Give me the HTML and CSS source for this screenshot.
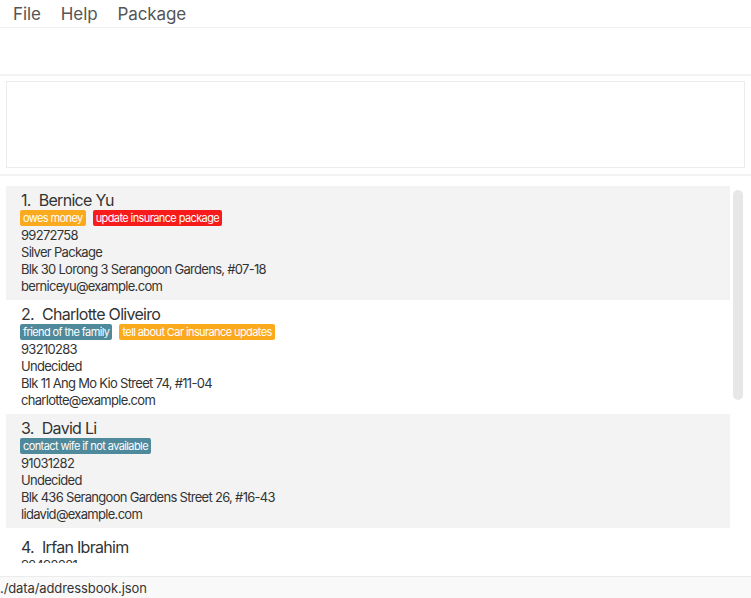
FILE: index.html
```html
<!DOCTYPE html>
<html>
<head>
<meta charset="utf-8">
<link rel="stylesheet" href="styles.css">
</head>
<body>
<div class="app">
  <nav class="menubar">
    <span class="menu">File</span>
    <span class="menu">Help</span>
    <span class="menu">Package</span>
  </nav>
  <div class="command"></div>
  <div class="sep"></div>
  <div class="result-wrap"><div class="result"></div></div>
  <div class="sep"></div>
  <div class="list-wrap">
    <div class="cells">
      <div class="cell shade">
        <div class="name"><span class="idx">1.</span>Bernice Yu</div>
        <div class="tags"><span class="tag orange">owes money</span><span class="tag red">update insurance package</span></div>
        <div class="line">99272758</div>
        <div class="line">Silver Package</div>
        <div class="line">Blk 30 Lorong 3 Serangoon Gardens, #07-18</div>
        <div class="line">berniceyu@example.com</div>
      </div>
      <div class="cell">
        <div class="name"><span class="idx">2.</span>Charlotte Oliveiro</div>
        <div class="tags"><span class="tag teal">friend of the family</span><span class="tag orange">tell about Car insurance updates</span></div>
        <div class="line">93210283</div>
        <div class="line">Undecided</div>
        <div class="line">Blk 11 Ang Mo Kio Street 74, #11-04</div>
        <div class="line">charlotte@example.com</div>
      </div>
      <div class="cell shade">
        <div class="name"><span class="idx">3.</span>David Li</div>
        <div class="tags"><span class="tag teal">contact wife if not available</span></div>
        <div class="line">91031282</div>
        <div class="line">Undecided</div>
        <div class="line">Blk 436 Serangoon Gardens Street 26, #16-43</div>
        <div class="line">lidavid@example.com</div>
      </div>
      <div class="cell notags">
        <div class="name"><span class="idx">4.</span>Irfan Ibrahim</div>
        <div class="line">92492021</div>
        <div class="line">Undecided</div>
        <div class="line">Blk 47 Tampines Street 20, #17-35</div>
        <div class="line">irfan@example.com</div>
      </div>
    </div>
    <div class="scrollbar"><div class="thumb"></div></div>
  </div>
  <footer class="status">./data/addressbook.json</footer>
</div>
</body>
</html>
```
FILE: styles.css
```css
html, body {
  margin: 0;
  padding: 0;
  background: #fff;
}
body {
  font-family: "Inter", "Liberation Sans", sans-serif;
  color: #333;
  width: 751px;
  height: 598px;
  overflow: hidden;
}
.app {
  display: flex;
  flex-direction: column;
  height: 598px;
}
.menubar {
  height: 27px;
  border-bottom: 1px solid #efefef;
  display: flex;
  align-items: center;
  padding-left: 13px;
  gap: 20px;
  font-size: 17px;
  letter-spacing: -0.1px;
  color: #555;
}
.command {
  height: 46px;
}
.sep {
  height: 2px;
  background: #f3f3f3;
}
.result-wrap {
  padding: 5px 6px 6px 6px;
}
.result {
  height: 85px;
  border: 1px solid #ececec;
}
.list-wrap {
  height: 400px;
  box-sizing: border-box;
  padding: 10px 0 13px 6px;
  display: flex;
  gap: 3px;
}
.cells {
  width: 724px;
  overflow: hidden;
}
.cell {
  height: 114px;
  box-sizing: border-box;
  padding: 5px 0 0 15px;
}
.cell.shade {
  background: #f3f3f3;
}
.cell.notags {
  padding-top: 10px;
}
.name {
  font-size: 16px;
  line-height: 19px;
  height: 19px;
  letter-spacing: -0.7px;
  color: #333;
}
.idx {
  display: inline-block;
  margin-right: 8px;
}
.tags {
  display: flex;
  gap: 7px;
  height: 16px;
  margin-left: -1px;
  margin-bottom: 1px;
}
.tag {
  font-size: 11px;
  line-height: 16px;
  height: 16px;
  padding: 0 3px;
  border-radius: 2px;
  letter-spacing: -0.6px;
  color: #fff;
}
.orange { background: #fbaa1e; }
.red { background: #f71b1b; }
.teal { background: #4f8a9c; }
.line {
  font-size: 13px;
  line-height: 17px;
  letter-spacing: -0.7px;
}
.scrollbar {
  width: 10px;
  padding-top: 4px;
}
.thumb {
  height: 210px;
  border-radius: 5px;
  background: #e7e7e7;
}
.status {
  height: 22px;
  box-sizing: border-box;
  border-top: 1px solid #ececec;
  background: #f9f9f9;
  font-size: 13px;
  line-height: 17px;
  padding-top: 3px;
  letter-spacing: -0.1px;
  color: #333;
}
```
